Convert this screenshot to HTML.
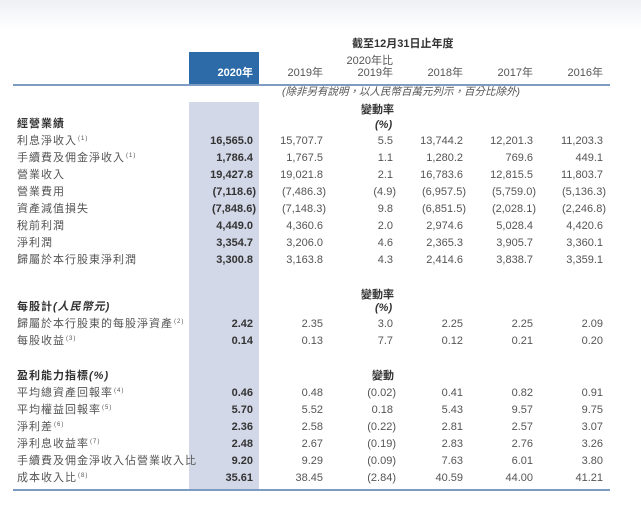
<!DOCTYPE html>
<html><head><meta charset="utf-8"><style>
body{margin:0;width:641px;height:506px;position:relative;overflow:hidden;background:#fff;font-family:"Liberation Sans","Noto Sans CJK TC",sans-serif;color:#555;font-size:11px}
.top{position:absolute;left:0;top:0;width:641px;height:30px;background:linear-gradient(#eef0f4,#fff)}
.hl{position:absolute;left:13px;width:597px;height:2px;background:#7d9cc4}
.t{position:absolute;white-space:nowrap;line-height:12px}
.r{position:absolute;white-space:nowrap;line-height:12px;text-align:right;width:70px}
.b{font-weight:bold;color:#333}
.s{font-size:6px;position:relative;top:-4px;margin-left:1px}
.c{letter-spacing:1px}
</style></head><body>
<div class="top"></div>
<div style="position:absolute;left:189px;top:52px;width:70px;height:33px;background:#2c6aa8"></div>
<div style="position:absolute;left:189px;top:102px;width:70px;height:388px;background:#d3d8e8"></div>
<div class="hl" style="top:84px"></div>
<div class="hl" style="top:489px"></div>
<div class="t b" style="left:352px;top:38px">截至12月31日止年度</div>
<div class="r" style="left:183px;top:67px;color:#fff;font-weight:bold">2020年</div>
<div class="r" style="left:253px;top:67px">2019年</div>
<div class="r" style="left:323px;top:55px">2020年比</div>
<div class="r" style="left:323px;top:67px">2019年</div>
<div class="r" style="left:393px;top:67px">2018年</div>
<div class="r" style="left:463px;top:67px">2017年</div>
<div class="r" style="left:533px;top:67px">2016年</div>
<div class="t" style="left:282px;top:86px;font-style:italic;font-size:10.5px">(除非另有說明，以人民幣百萬元列示，百分比除外)</div>
<div class="t b" style="left:361px;top:104px">變動率</div>
<div class="t b" style="left:375px;top:119px;font-style:italic">(%)</div>
<div class="t b" style="left:361px;top:289px">變動率</div>
<div class="t b" style="left:375px;top:302px;font-style:italic">(%)</div>
<div class="t b" style="left:372px;top:370px">變動</div>
<div class="t b c" style="left:17px;top:118px">經營業績</div>
<div class="t b c" style="left:17px;top:301px">每股計<i>(人民幣元)</i></div>
<div class="t b c" style="left:17px;top:370px">盈利能力指標<i>(%)</i></div>
<div id="rows"></div>
<script>
const data=[
[135,"利息淨收入<sup>(1)</sup>","16,565.0","15,707.7","5.5","13,744.2","12,201.3","11,203.3"],
[152,"手續費及佣金淨收入<sup>(1)</sup>","1,786.4","1,767.5","1.1","1,280.2","769.6","449.1"],
[169,"營業收入","19,427.8","19,021.8","2.1","16,783.6","12,815.5","11,803.7"],
[186,"營業費用","(7,118.6)","(7,486.3)","(4.9)","(6,957.5)","(5,759.0)","(5,136.3)"],
[203,"資產減值損失","(7,848.6)","(7,148.3)","9.8","(6,851.5)","(2,028.1)","(2,246.8)"],
[220,"稅前利潤","4,449.0","4,360.6","2.0","2,974.6","5,028.4","4,420.6"],
[237,"淨利潤","3,354.7","3,206.0","4.6","2,365.3","3,905.7","3,360.1"],
[254,"歸屬於本行股東淨利潤","3,300.8","3,163.8","4.3","2,414.6","3,838.7","3,359.1"],
[318,"歸屬於本行股東的每股淨資產<sup>(2)</sup>","2.42","2.35","3.0","2.25","2.25","2.09"],
[335,"每股收益<sup>(3)</sup>","0.14","0.13","7.7","0.12","0.21","0.20"],
[387,"平均總資產回報率<sup>(4)</sup>","0.46","0.48","(0.02)","0.41","0.82","0.91"],
[404,"平均權益回報率<sup>(5)</sup>","5.70","5.52","0.18","5.43","9.57","9.75"],
[421,"淨利差<sup>(6)</sup>","2.36","2.58","(0.22)","2.81","2.57","3.07"],
[438,"淨利息收益率<sup>(7)</sup>","2.48","2.67","(0.19)","2.83","2.76","3.26"],
[455,"手續費及佣金淨收入佔營業收入比","9.20","9.29","(0.09)","7.63","6.01","3.80"],
[472,"成本收入比<sup>(8)</sup>","35.61","38.45","(2.84)","40.59","44.00","41.21"]];
let h="";
const base=[183,253,323,393,463,533];
for(const d of data){
h+=`<div class="t c" style="left:17px;top:${d[0]}px">${d[1].replace(/<sup>(.*)<\/sup>/,'<span class="s">$1</span>')}</div>`;
for(let i=0;i<6;i++){const v=d[i+2];const x=base[i]+(v.startsWith("(")?3:0);
h+=`<div class="r${i==0?' b':''}" style="left:${x}px;top:${d[0]}px">${v}</div>`;}
}
document.getElementById("rows").innerHTML=h;
</script>
</body></html>
